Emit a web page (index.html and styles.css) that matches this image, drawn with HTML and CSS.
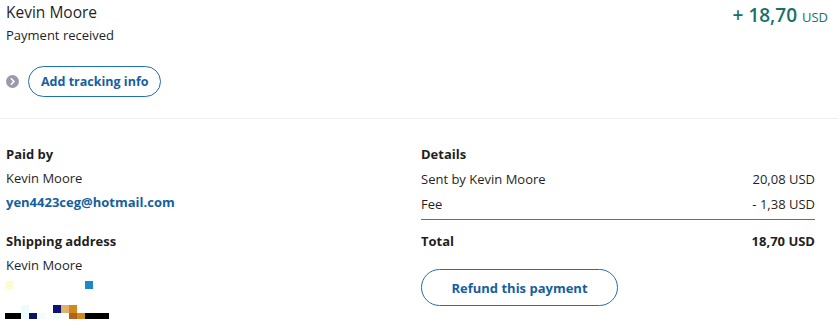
FILE: index.html
```html
<!DOCTYPE html>
<html>
<head>
<meta charset="utf-8">
<link rel="stylesheet" href="styles.css">
</head>
<body>
<div class="page">
  <section class="summary">
    <div class="head">
      <div class="who">
        <div class="name">Kevin Moore</div>
        <div class="status">Payment received</div>
      </div>
      <div class="amount">+ 18,70 <span class="cur">USD</span></div>
    </div>
    <div class="track">
      <span class="dot"><svg width="13" height="13" viewBox="0 0 13 13"><circle cx="6.5" cy="6.5" r="6.5" fill="#9d99aa"/><path d="M5.3 3.8 L8 6.5 L5.3 9.2" fill="none" stroke="#fff" stroke-width="1.6" stroke-linecap="round" stroke-linejoin="round"/></svg></span>
      <button class="pill small">Add tracking info</button>
    </div>
  </section>
  <section class="details">
    <div class="col left">
      <div class="label">Paid by</div>
      <div class="line">Kevin Moore</div>
      <div class="line link">yen4423ceg@hotmail.com</div>
      <div class="label gap">Shipping address</div>
      <div class="line">Kevin Moore</div>
      <div class="mosaic">
        <span style="grid-area:1/1;background:#fdfbd0"></span>
        <span style="grid-area:1/11;background:#1c88c8"></span>
        <span style="grid-area:4/3;background:#eafcfc"></span>
        <span style="grid-area:4/7;background:#0c1470"></span>
        <span style="grid-area:4/8;background:#e0b070"></span>
        <span style="grid-area:4/9;background:#d08a1c"></span>
      </div>
      <div class="mosaic2">
        <span style="width:16px;background:#000"></span>
        <span style="width:8px;background:#eafcfc"></span>
        <span style="width:8px;background:#0c1460"></span>
        <span style="width:8px;background:#f2fcfc"></span>
        <span style="width:8px;background:#fafefe"></span>
        <span style="width:8px;background:#f4fcfc"></span>
        <span style="width:8px;background:#fff"></span>
        <span style="width:8px;background:#b06020"></span>
        <span style="width:8px;background:#d08a1c"></span>
        <span style="width:24px;background:#000"></span>
      </div>
    </div>
    <div class="col right">
      <div class="label">Details</div>
      <div class="row"><span>Sent by Kevin Moore</span><span>20,08 USD</span></div>
      <div class="row"><span>Fee</span><span>- 1,38 USD</span></div>
      <div class="row total"><span>Total</span><span>18,70 USD</span></div>
      <button class="pill big">Refund this payment</button>
    </div>
  </section>
</div>
</body>
</html>
```
FILE: styles.css
```css
* { box-sizing: border-box; }
body {
  margin: 0;
  background: #fff;
  font-family: "Open Sans", "Noto Sans", sans-serif;
  color: #1f1f1f;
}
.page { width: 838px; }
.summary {
  padding: 2px 10px 0 6px;
  height: 119px;
  border-bottom: 1px solid #eeeeee;
}
.head { display: flex; justify-content: space-between; align-items: flex-start; }
.name { font-size: 15.5px; line-height: 20px; }
.status { font-size: 13px; line-height: 20px; margin-top: 3px; }
.amount {
  font-size: 19px;
  font-weight: 600;
  color: #16716a;
  line-height: 36px;
  margin-top: -5px;
}
.amount .cur { font-size: 13px; font-weight: 500; }
.track { display: flex; align-items: center; gap: 9px; margin-top: 21px; }
.dot { display: flex; }
.pill {
  background: #fff;
  border: 1px solid #1f6fb2;
  border-radius: 999px;
  color: #155f9f;
  font-family: inherit;
  font-weight: 700;
  cursor: pointer;
}
.pill.small { height: 31px; padding: 0 12px; font-size: 12.5px; }
.details {
  display: flex;
  padding: 26px 23px 0 6px;
}
.col.left { width: 415px; }
.col.right { flex: 1; }
.label { font-size: 13px; font-weight: 700; line-height: 18px; }
.label.gap { margin-top: 21px; }
.line { font-size: 13px; line-height: 18px; margin-top: 6px; }
.line.link { color: #155f9f; font-weight: 700; }
.row {
  display: flex;
  justify-content: space-between;
  font-size: 13px;
  line-height: 18px;
  margin-top: 7px;
}
.row.total {
  font-weight: 700;
  border-top: 1px solid #6b6b6b;
  margin-top: 6px;
  padding-top: 12px;
}
.pill.big {
  margin-top: 19px;
  width: 197px;
  height: 37px;
  font-size: 13px;
}
.mosaic {
  display: grid;
  grid-template-columns: repeat(11, 8px);
  grid-template-rows: repeat(4, 8px);
  margin-top: 7px;
  margin-left: -1px;
}
.mosaic span { display: block; }
.mosaic2 { display: flex; height: 6px; margin-left: -1px; }
.mosaic2 span { display: block; height: 6px; }
```
